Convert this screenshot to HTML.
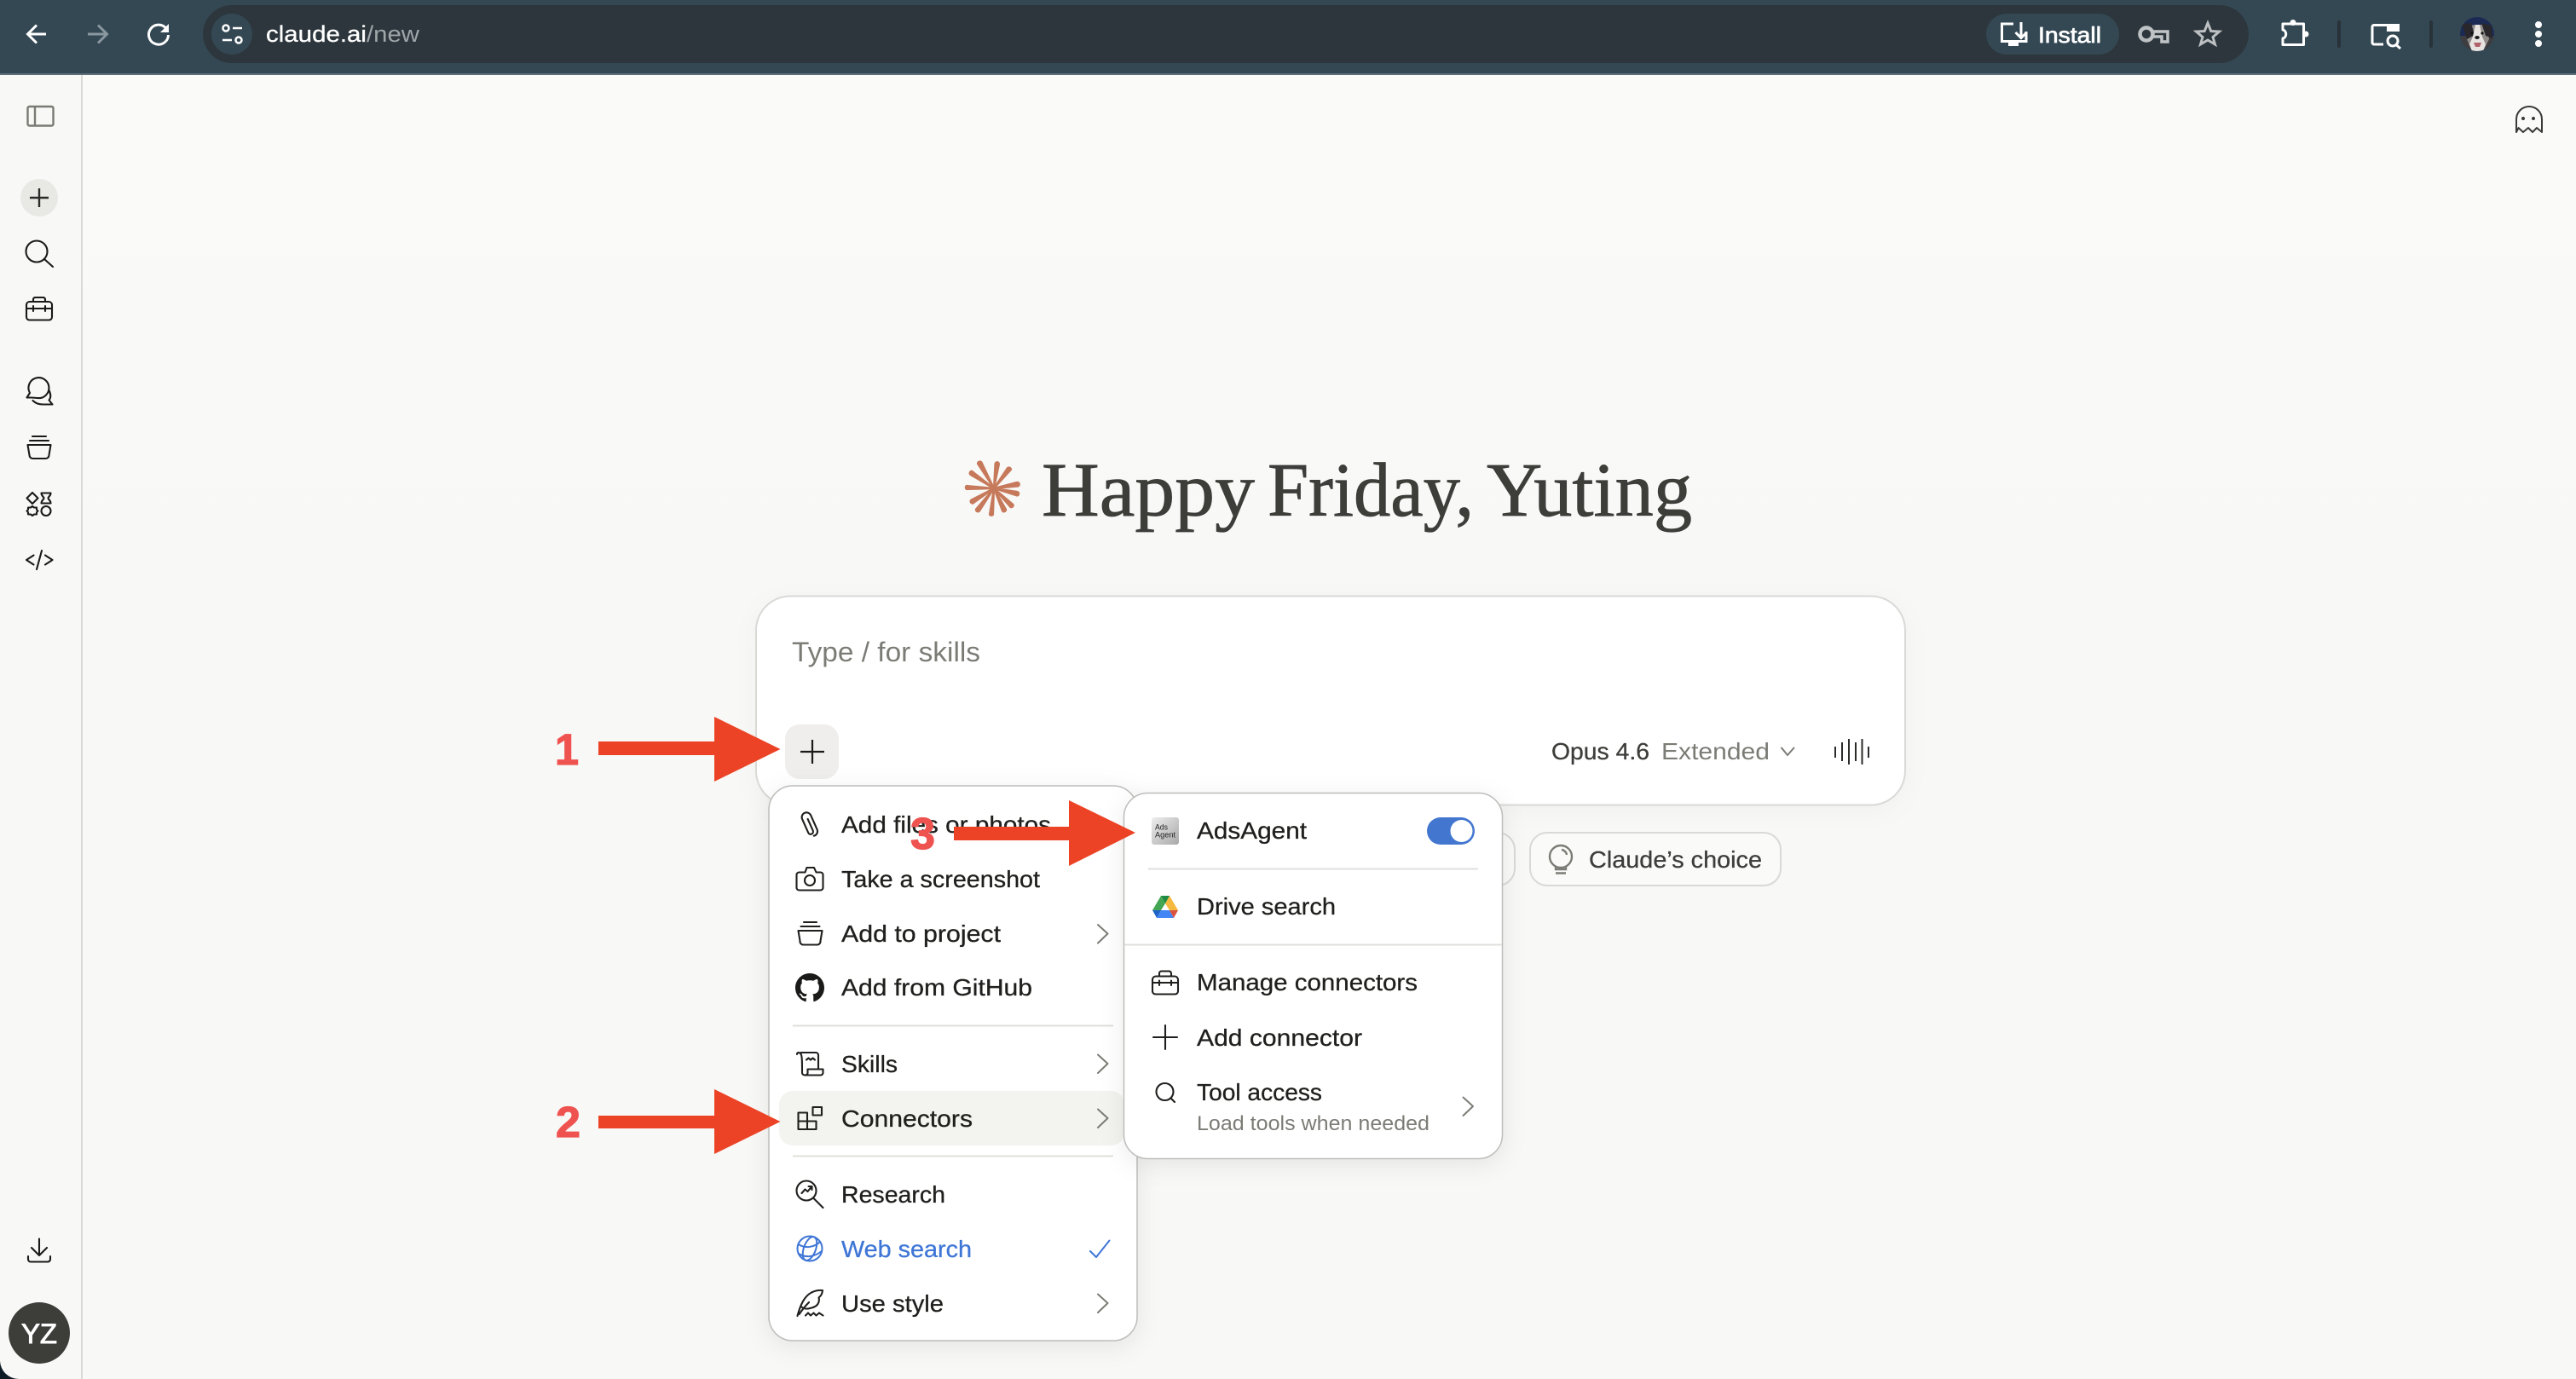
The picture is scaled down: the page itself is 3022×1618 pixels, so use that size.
<!DOCTYPE html>
<html lang="en">
<head>
<meta charset="utf-8">
<title>Claude</title>
<style>
html,body{margin:0;padding:0;width:3022px;height:1618px;overflow:hidden;background:#fafaf8}
svg{display:block;position:absolute;left:0;top:0}
text{font-family:"Liberation Sans",sans-serif;white-space:pre}
.m{font-size:28px;fill:#1f1f1d;stroke:#1f1f1d;stroke-width:.3}
.h{font-family:"Liberation Serif",serif;font-size:90px;fill:#3d3d3a;stroke:#3d3d3a;stroke-width:.8}
.i{fill:none;stroke:#1f1f1d;stroke-width:2.100;stroke-linecap:round;stroke-linejoin:round}
.c{fill:none;stroke:#7c7c76;stroke-width:2;stroke-linecap:round;stroke-linejoin:round}
</style>
</head>
<body>
<svg width="3022" height="1618" viewBox="0 0 3022 1618" xmlns="http://www.w3.org/2000/svg">
<defs>
<linearGradient id="bg" x1="0" y1="0" x2="0" y2="1"><stop offset="0" stop-color="#fafaf8"/><stop offset=".45" stop-color="#f8f8f6"/><stop offset="1" stop-color="#f8f8f6"/></linearGradient>
<linearGradient id="ads" x1="0" y1="0" x2="1" y2="1"><stop offset="0" stop-color="#eeeeee"/><stop offset="1" stop-color="#a8a8a8"/></linearGradient>
<clipPath id="dog"><ellipse cx="2906" cy="40" rx="20" ry="20"/></clipPath>
</defs>

<!-- page -->
<rect x="0" y="88" width="3022" height="1530" fill="url(#bg)"/>
<rect x="0" y="88" width="95" height="1530" fill="#f8f8f6"/>
<rect x="95" y="88" width="2" height="1530" fill="#d9d9d6"/>
<path d="M0 1597V1618H22A22 22 0 0 1 0 1597Z" fill="#0d1b24"/>

<!-- browser bar -->
<rect x="0" y="0" width="3022" height="86" fill="#344854"/>
<rect x="0" y="86" width="3022" height="2" fill="#5d6e79"/>
<rect x="238" y="6" width="2400" height="68" rx="34" fill="#2c363c"/>
<path d="M54 40H33M43 29.500L32.500 40L43 50.500" fill="none" stroke="#fff" stroke-width="3"/>
<path d="M103 40H125M115 29.500L125.500 40L115 50.500" fill="none" stroke="#8a979f" stroke-width="3"/>
<path d="M195 33.500A11.500 11.500 0 1 0 197.500 41" fill="none" stroke="#fff" stroke-width="3"/>
<path d="M198 28V38H188Z" fill="#fff"/>
<circle cx="272" cy="40" r="24" fill="#344854"/>
<circle cx="265" cy="33" r="3.500" fill="none" stroke="#fff" stroke-width="2.500"/>
<path d="M273 33H284M261 47H272" stroke="#fff" stroke-width="2.500"/>
<circle cx="280" cy="47" r="3.500" fill="none" stroke="#fff" stroke-width="2.500"/>
<text x="312" y="49" font-size="27" fill="#fff" stroke="#fff" stroke-width=".3" textLength="118" lengthAdjust="spacingAndGlyphs">claude.ai</text>
<text x="430" y="49" font-size="27" fill="#9fa6aa" textLength="62" lengthAdjust="spacingAndGlyphs">/new</text>

<rect x="2330" y="16" width="156" height="48" rx="24" fill="#344854"/>
<path d="M2362 28H2348.500V48.500H2377V37" fill="none" stroke="#fff" stroke-width="3"/>
<rect x="2356" y="48" width="12" height="6" fill="#fff"/>
<path d="M2371 26V44M2364.500 38L2371 44.500L2377.500 38" fill="none" stroke="#fff" stroke-width="3"/>
<text x="2391" y="50" font-size="26" fill="#fff" stroke="#fff" stroke-width=".7" textLength="74" lengthAdjust="spacingAndGlyphs">Install</text>
<circle cx="2518" cy="40" r="7.500" fill="none" stroke="#bfc3c5" stroke-width="4.500"/>
<path d="M2525 37H2543V49H2536V43H2525" fill="none" stroke="#bfc3c5" stroke-width="3.500"/>
<path d="M2590 27L2593.800 36.500L2603.500 37L2596 43.500L2598.500 52L2590 47L2581.500 52L2584 43.500L2576.500 37L2586.200 36.500Z" fill="none" stroke="#bcc0c2" stroke-width="3"/>
<path d="M2678 28H2702.500V52.500H2678V45C2683 44 2683 36 2678 35Z" fill="none" stroke="#fff" stroke-width="3" stroke-linejoin="round"/>
<circle cx="2690" cy="26.500" r="3.500" fill="#fff"/><circle cx="2705" cy="40" r="3.500" fill="#fff"/>
<rect x="2742" y="24" width="4" height="32" rx="2" fill="#283238"/>
<path d="M2800 29.500H2785A2 2 0 0 0 2783 31.500V50A2 2 0 0 0 2785 52H2796" fill="none" stroke="#fff" stroke-width="3"/>
<rect x="2800" y="28" width="15" height="9" fill="#fff"/>
<circle cx="2807" cy="48" r="6" fill="none" stroke="#fff" stroke-width="3"/>
<path d="M2811 52.500L2816 57" stroke="#fff" stroke-width="3"/>
<rect x="2850" y="24" width="4" height="32" rx="2" fill="#283238"/>
<g clip-path="url(#dog)">
<rect x="2884" y="18" width="44" height="44" fill="#1b2a55"/>
<rect x="2884" y="42" width="44" height="20" fill="#3e3d40"/>
<path d="M2895 31L2903 29H2912L2919 33L2920 46L2913 60H2900L2894 46Z" fill="#8f8c8a"/>
<path d="M2888 28L2899 27L2903 41L2894 46Z" fill="#29272c"/>
<path d="M2911 27L2923 30L2924 45L2916 42Z" fill="#29272c"/>
<path d="M2904 29H2909L2912 43L2916 52L2913 60H2900L2897 52L2901 43Z" fill="#e6e3e0"/>
<circle cx="2900" cy="39" r="1.600" fill="#111"/><circle cx="2912" cy="39" r="1.600" fill="#111"/>
<ellipse cx="2906" cy="44" rx="2.800" ry="2" fill="#1b1b1b"/>
<path d="M2902 50H2911L2909 55H2904Z" fill="#b0616a"/>
</g>
<circle cx="2978" cy="29" r="4" fill="#fff"/><circle cx="2978" cy="40" r="4" fill="#fff"/><circle cx="2978" cy="51" r="4" fill="#fff"/>

<!-- sidebar icons -->
<rect x="32.500" y="125" width="30" height="22.500" rx="2" fill="none" stroke="#7a7a75" stroke-width="2.400"/>
<path d="M41 125V147" stroke="#7a7a75" stroke-width="2.400"/>
<circle cx="46" cy="232" r="22" fill="#e8e8e5"/>
<path d="M46 221V243M35 232H57" stroke="#2b2b29" stroke-width="2.400"/>
<g class="i" style="stroke:#1a1a18">
<circle cx="43" cy="295" r="12.500"/><path d="M52 304L62 313"/>
<path d="M31 362H61M31 357A4 4 0 0 1 35 354H57A4 4 0 0 1 61 357V372A3.500 3.500 0 0 1 57.500 375.500H34.500A3.500 3.500 0 0 1 31 372Z"/>
<path d="M39 354V351A2.500 2.500 0 0 1 41.500 349H50.500A2.500 2.500 0 0 1 53 351V354M39 359V365M53 359V365" />
<path d="M37 466.500H31.500L35 461A12 12 0 1 1 44 467Z"/>
<path d="M57.500 458C60 463 59.500 467 57.500 469.500L61.500 474.500H50C45.500 474.500 41.500 473 38.500 470"/>
<path d="M38 512H54M35 517H57M32.500 522H59.500L57.500 534A4 4 0 0 1 53.500 538H38.500A4 4 0 0 1 34.500 534Z"/>
<path d="M38 578L44.500 584.500L38 591L31.500 584.500Z"/>
<path d="M48.500 578.500H59.500C59.500 582 56.500 583 56.500 584.500C56.500 586 59.500 587 59.500 590.500H48.500C48.500 587 51.500 586 51.500 584.500C51.500 583 48.500 582 48.500 578.500Z"/>
<path d="M38 594L40 595.500L43 595.500L43 598L44.500 599.500L43 601L43 603.500L40 603.500L38 605L36 603.500L33 603.500L33 601L31.500 599.500L33 598L33 595.500L36 595.500Z"/>
<circle cx="54" cy="599.500" r="5.500"/>
<path d="M39.500 651.500L31 657L39.500 662.500M49 646L43 668M53 651.500L61.500 657L53 662.500"/>
<path d="M46 1453.500V1473M37 1464L46 1473L55 1464M33 1474V1477.500A3 3 0 0 0 36 1480.500H56A3 3 0 0 0 59 1477.500V1474"/>
</g>
<circle cx="46" cy="1564" r="36" fill="#3d3d3a"/>
<text x="25" y="1576" font-size="32" fill="#fff" stroke="#fff" stroke-width=".9" textLength="42" lengthAdjust="spacingAndGlyphs">YZ</text>

<!-- ghost -->
<path d="M2952 155V140A15 15 0 0 1 2982 140V155L2976 150L2971 155L2966 150L2960 155L2954.500 150Z" fill="none" stroke="#3a3a38" stroke-width="2" stroke-linejoin="round"/>
<circle cx="2960" cy="139" r="2" fill="#3a3a38"/><circle cx="2972" cy="139" r="2" fill="#3a3a38"/>

<!-- heading -->
<g fill="#c6795b" stroke="#c6795b" stroke-width="2.200" stroke-linejoin="round">
<path d="M1166 573L1147 544A2.500 2.500 0 0 1 1151.500 542.500Z"/>
<path d="M1166 573L1167.500 544.500A2.200 2.200 0 0 1 1172 544.500Z"/>
<path d="M1166 573L1182 549A2.500 2.500 0 0 1 1186 551Z"/>
<path d="M1166 573L1193 566A2.300 2.300 0 0 1 1194 570.500Z"/>
<path d="M1166 573L1193.500 577A2.300 2.300 0 0 1 1193 581.500Z"/>
<path d="M1166 573L1188.500 592A2.300 2.300 0 0 1 1185.500 595Z"/>
<path d="M1166 573L1180 597.500A2.300 2.300 0 0 1 1176 599.500Z"/>
<path d="M1166 573L1165 603.500A2.200 2.200 0 0 1 1161 603.500Z"/>
<path d="M1166 573L1149 599.500A2.300 2.300 0 0 1 1145 597.500Z"/>
<path d="M1166 573L1141.500 590.500A2.300 2.300 0 0 1 1139.500 586.500Z"/>
<path d="M1166 573L1134 574A2.300 2.300 0 0 1 1134 570Z"/>
<path d="M1166 573L1138.500 557A2.300 2.300 0 0 1 1140.500 553Z"/>
</g>
<text class="h" x="1222" y="605" textLength="250" lengthAdjust="spacingAndGlyphs">Happy</text>
<text class="h" x="1487" y="605" textLength="242" lengthAdjust="spacingAndGlyphs">Friday,</text>
<text class="h" x="1744" y="605" textLength="241" lengthAdjust="spacingAndGlyphs">Yuting</text>

<!-- composer -->
<rect x="887" y="699.500" width="1348" height="245" rx="40" fill="#fff" stroke="#d9d9d6" stroke-width="2" style="filter:drop-shadow(0 6px 14px rgba(0,0,0,.03))"/>
<text x="929" y="776" font-size="32" fill="#7c7c76" textLength="221" lengthAdjust="spacingAndGlyphs">Type / for skills</text>
<rect x="921" y="850" width="63" height="64" rx="17" fill="#efeeec"/>
<path d="M953 868V896M939 882H967" stroke="#1a1a18" stroke-width="2.200"/>
<text x="1820" y="891" font-size="28" fill="#3d3d3a" stroke="#3d3d3a" stroke-width=".3" textLength="115" lengthAdjust="spacingAndGlyphs">Opus 4.6</text>
<text x="1949" y="891" font-size="28" fill="#7c7c76" textLength="127" lengthAdjust="spacingAndGlyphs">Extended</text>
<path d="M2090 877.500L2097 886L2104.500 877.500" class="c"/>
<path d="M2153 876V889M2161 871V893M2169 867V897M2177 871V893M2184.500 867V897M2192 876V889" stroke="#2b2b29" stroke-width="2"/>

<!-- chips -->
<rect x="1500" y="977" width="277" height="62" rx="20" fill="#fafaf8" stroke="#d9d9d6" stroke-width="2"/>
<rect x="1795" y="977" width="294" height="62" rx="20" fill="#fafaf8" stroke="#d9d9d6" stroke-width="2"/>
<circle cx="1831" cy="1005" r="13" fill="none" stroke="#7c7c76" stroke-width="2.400"/>
<path d="M1825 1017V1020H1837V1017M1825 1024.500H1837M1832 997A7 7 0 0 1 1838 1003" fill="none" stroke="#7c7c76" stroke-width="2.400"/>
<text x="1864" y="1018" font-size="28" fill="#3d3d3a" stroke="#3d3d3a" stroke-width=".3" textLength="203" lengthAdjust="spacingAndGlyphs">Claude’s choice</text>

<!-- menu 1 -->
<rect x="902" y="922" width="432" height="651" rx="28" fill="#fff" stroke="#bdbdbb" stroke-width="1.500" style="filter:drop-shadow(0 6px 14px rgba(0,0,0,.08))"/>
<rect x="914" y="1280" width="405.500" height="64" rx="16" fill="#f3f3ef"/>
<path d="M930 1203.500H1306M930 1356.500H1306" stroke="#dfdfdc" stroke-width="2"/>
<text class="m" x="987" y="977" textLength="246" lengthAdjust="spacingAndGlyphs">Add files or photos</text>
<text class="m" x="987" y="1041" textLength="233" lengthAdjust="spacingAndGlyphs">Take a screenshot</text>
<text class="m" x="987" y="1105" textLength="187" lengthAdjust="spacingAndGlyphs">Add to project</text>
<text class="m" x="987" y="1168" textLength="224" lengthAdjust="spacingAndGlyphs">Add from GitHub</text>
<text class="m" x="987" y="1258" textLength="66" lengthAdjust="spacingAndGlyphs">Skills</text>
<text class="m" x="987" y="1322" textLength="154" lengthAdjust="spacingAndGlyphs">Connectors</text>
<text class="m" x="987" y="1411" textLength="122" lengthAdjust="spacingAndGlyphs">Research</text>
<text class="m" x="987" y="1475" textLength="153" lengthAdjust="spacingAndGlyphs" style="fill:#3f76d6;stroke:#3f76d6">Web search</text>
<text class="m" x="987" y="1539" textLength="120" lengthAdjust="spacingAndGlyphs">Use style</text>
<path class="c" d="M1288 1085L1299.500 1095.500L1288 1106.500M1288 1237.500L1299.500 1248L1288 1259M1288 1301.500L1299.500 1312L1288 1323M1288 1518.500L1299.500 1529L1288 1540"/>
<path d="M1279 1468L1286 1475L1301.500 1455.500" fill="none" stroke="#3f76d6" stroke-width="2" stroke-linecap="round" stroke-linejoin="round"/>
<g class="i">
<g transform="translate(950 967.500) rotate(-24)"><path d="M0.500 -7V8A3 3 0 0 1 -5.500 8V-9.500A5.500 5.500 0 0 1 5.500 -9.500V9.500A5.500 6 0 0 1 -1 14"/></g>
<path d="M934.500 1027A3 3 0 0 1 937.500 1023.500H944.500L946.500 1018H955L957.500 1023.500H962.500A3 3 0 0 1 965.500 1027V1041A3 3 0 0 1 962.500 1044.500H937.500A3 3 0 0 1 934.500 1041Z"/>
<circle cx="950" cy="1033" r="6"/>
<path d="M943 1082H958M939.500 1087H961.500M936.500 1092H964.500L962.500 1104A4 4 0 0 1 958.500 1108.500H942.500A4 4 0 0 1 938.500 1104Z"/>
<path d="M935 1237C935 1234.500 938 1234.500 939.500 1236.500C941 1239 941 1246 941 1258A3 3 0 0 0 944 1261.500H963A3 3 0 0 0 965.500 1258V1254.500H947.500V1258A3 3 0 0 1 944 1261.500M939.500 1235H957A3 3 0 0 1 960 1238V1254"/>
<path d="M946 1243.500L948.500 1241.500L951 1243.500L953.500 1241.500L956 1243.500"/>
<path d="M936.500 1305.500H947V1315.500H957.500V1325H936.500ZM947 1315.500V1325M936.500 1315.500H947M953.500 1299H964V1308.500H953.500Z"/>
<circle cx="946" cy="1397" r="11.500"/>
<path d="M954.500 1406L965.500 1417M940.500 1400L944.500 1395.500L947.500 1398L952 1392.500M948.500 1392H952.500V1396"/>
<path d="M935.500 1544C939 1531 943.500 1521 952 1516.500C956 1514.500 960.500 1513.500 965 1514C964.500 1518 963.500 1520 960.500 1522.500C962 1528 959 1533 952 1534.500C948 1536 943.500 1536 940.500 1533.500M949 1528C946 1531 941 1537 937.500 1542"/>
<path d="M945 1543.500L948 1540.500L951 1543.500L954.500 1540.500L957.500 1543.500L961 1540.500L965.500 1543.500"/>
</g>
<g transform="translate(933 1142) scale(2.125)"><path fill="#1a1a18" d="M8 0C3.580 0 0 3.580 0 8c0 3.540 2.290 6.530 5.470 7.590.4.070.55-.17.55-.38 0-.19-.01-.82-.01-1.490-2.010.37-2.530-.49-2.690-.94-.09-.23-.48-.94-.82-1.130-.28-.15-.68-.52-.01-.53.63-.01 1.080.58 1.230.82.72 1.210 1.870.87 2.330.66.07-.52.28-.87.51-1.070-1.780-.2-3.640-.89-3.640-3.950 0-.87.31-1.590.82-2.150-.08-.2-.36-1.020.08-2.120 0 0 .67-.21 2.200.82.64-.18 1.320-.27 2-.27.68 0 1.360.09 2 .27 1.530-1.040 2.200-.82 2.200-.82.44 1.100.16 1.920.08 2.120.51.56.82 1.270.82 2.150 0 3.070-1.870 3.750-3.650 3.950.29.25.54.73.54 1.480 0 1.070-.01 1.930-.01 2.200 0 .21.15.46.55.38A8.013 8.013 0 0016 8c0-4.420-3.580-8-8-8z"/></g>
<g fill="none" stroke="#3f76d6" stroke-width="2">
<circle cx="950" cy="1465" r="14.500"/>
<ellipse cx="950" cy="1465" rx="7" ry="14.500" transform="rotate(20 950 1465)"/>
<path d="M936.500 1460C945 1465 955 1464 962.500 1456.500M937 1471C945 1476 955 1475 964 1468"/>
</g>

<!-- menu 2 -->
<rect x="1318.500" y="930.500" width="444" height="429" rx="28" fill="#fff" stroke="#bdbdbb" stroke-width="1.500" style="filter:drop-shadow(0 6px 14px rgba(0,0,0,.08))"/>
<path d="M1347 1019.500H1734M1319 1108.500H1762" stroke="#dfdfdc" stroke-width="2"/>
<rect x="1351" y="959" width="32" height="32" rx="3" fill="url(#ads)"/>
<text x="1355" y="973.500" font-size="9" fill="#222" textLength="15" lengthAdjust="spacingAndGlyphs">Ads</text>
<text x="1355" y="982.500" font-size="9" fill="#222" textLength="24" lengthAdjust="spacingAndGlyphs">Agent</text>
<text class="m" x="1404" y="984" textLength="129" lengthAdjust="spacingAndGlyphs">AdsAgent</text>
<rect x="1674" y="959" width="56" height="32" rx="16" fill="#4377cf"/>
<circle cx="1714.500" cy="975" r="13" fill="#fff"/>
<g transform="translate(1352 1051)">
<path d="M0 17L10 0L15 9L10 17Z" fill="#43a652"/>
<path d="M20 0L30 17H20L15 9Z" fill="#f6b93f"/>
<path d="M10 0H20L15 9Z" fill="#1f8a41"/>
<path d="M5 26H25L20 17H10Z" fill="#4285f4"/>
<path d="M0 17L5 26L10 17Z" fill="#1f63c8"/>
<path d="M30 17L25 26L20 17Z" fill="#d9523f"/>
</g>
<text class="m" x="1404" y="1073" textLength="163" lengthAdjust="spacingAndGlyphs">Drive search</text>
<g class="i">
<path d="M1352 1153H1382M1352 1149A4 4 0 0 1 1356 1145.500H1378A4 4 0 0 1 1382 1149V1163A3.500 3.500 0 0 1 1378.500 1166.500H1355.500A3.500 3.500 0 0 1 1352 1163Z"/>
<path d="M1360 1145.500V1142A2.500 2.500 0 0 1 1362.500 1139.500H1371.500A2.500 2.500 0 0 1 1374 1142V1145.500M1360 1150.500V1156M1374 1150.500V1156"/>
<path d="M1367 1203V1231M1353 1217H1381"/>
<circle cx="1366.500" cy="1281" r="10"/><path d="M1373.500 1288.500L1378 1293"/>
</g>
<text class="m" x="1404" y="1162" textLength="259" lengthAdjust="spacingAndGlyphs">Manage connectors</text>
<text class="m" x="1404" y="1227" textLength="194" lengthAdjust="spacingAndGlyphs">Add connector</text>
<text class="m" x="1404" y="1291" textLength="147" lengthAdjust="spacingAndGlyphs">Tool access</text>
<text x="1404" y="1326" font-size="24" fill="#7c7c76" textLength="273" lengthAdjust="spacingAndGlyphs">Load tools when needed</text>
<path class="c" d="M1716.500 1287.500L1728 1298L1716.500 1309"/>

<!-- annotations -->
<g fill="#ec4326">
<path d="M702 870H838V841L915.500 879L838 917V886H702Z"/>
<path d="M702 1309H838V1278L915.500 1316L838 1354V1324H702Z"/>
<path d="M1119 970H1254V939L1332 977L1254 1016V986H1119Z"/>
</g>
<g fill="#ef5350" stroke="#ef5350" stroke-width="1.200">
<text x="651" y="897" font-weight="700" font-size="51" textLength="28" lengthAdjust="spacingAndGlyphs">1</text>
<text x="652" y="1334" font-weight="700" font-size="51" textLength="29" lengthAdjust="spacingAndGlyphs">2</text>
<text x="1068" y="996" font-weight="700" font-size="52" textLength="29" lengthAdjust="spacingAndGlyphs">3</text>
</g>
</svg>
</body>
</html>
